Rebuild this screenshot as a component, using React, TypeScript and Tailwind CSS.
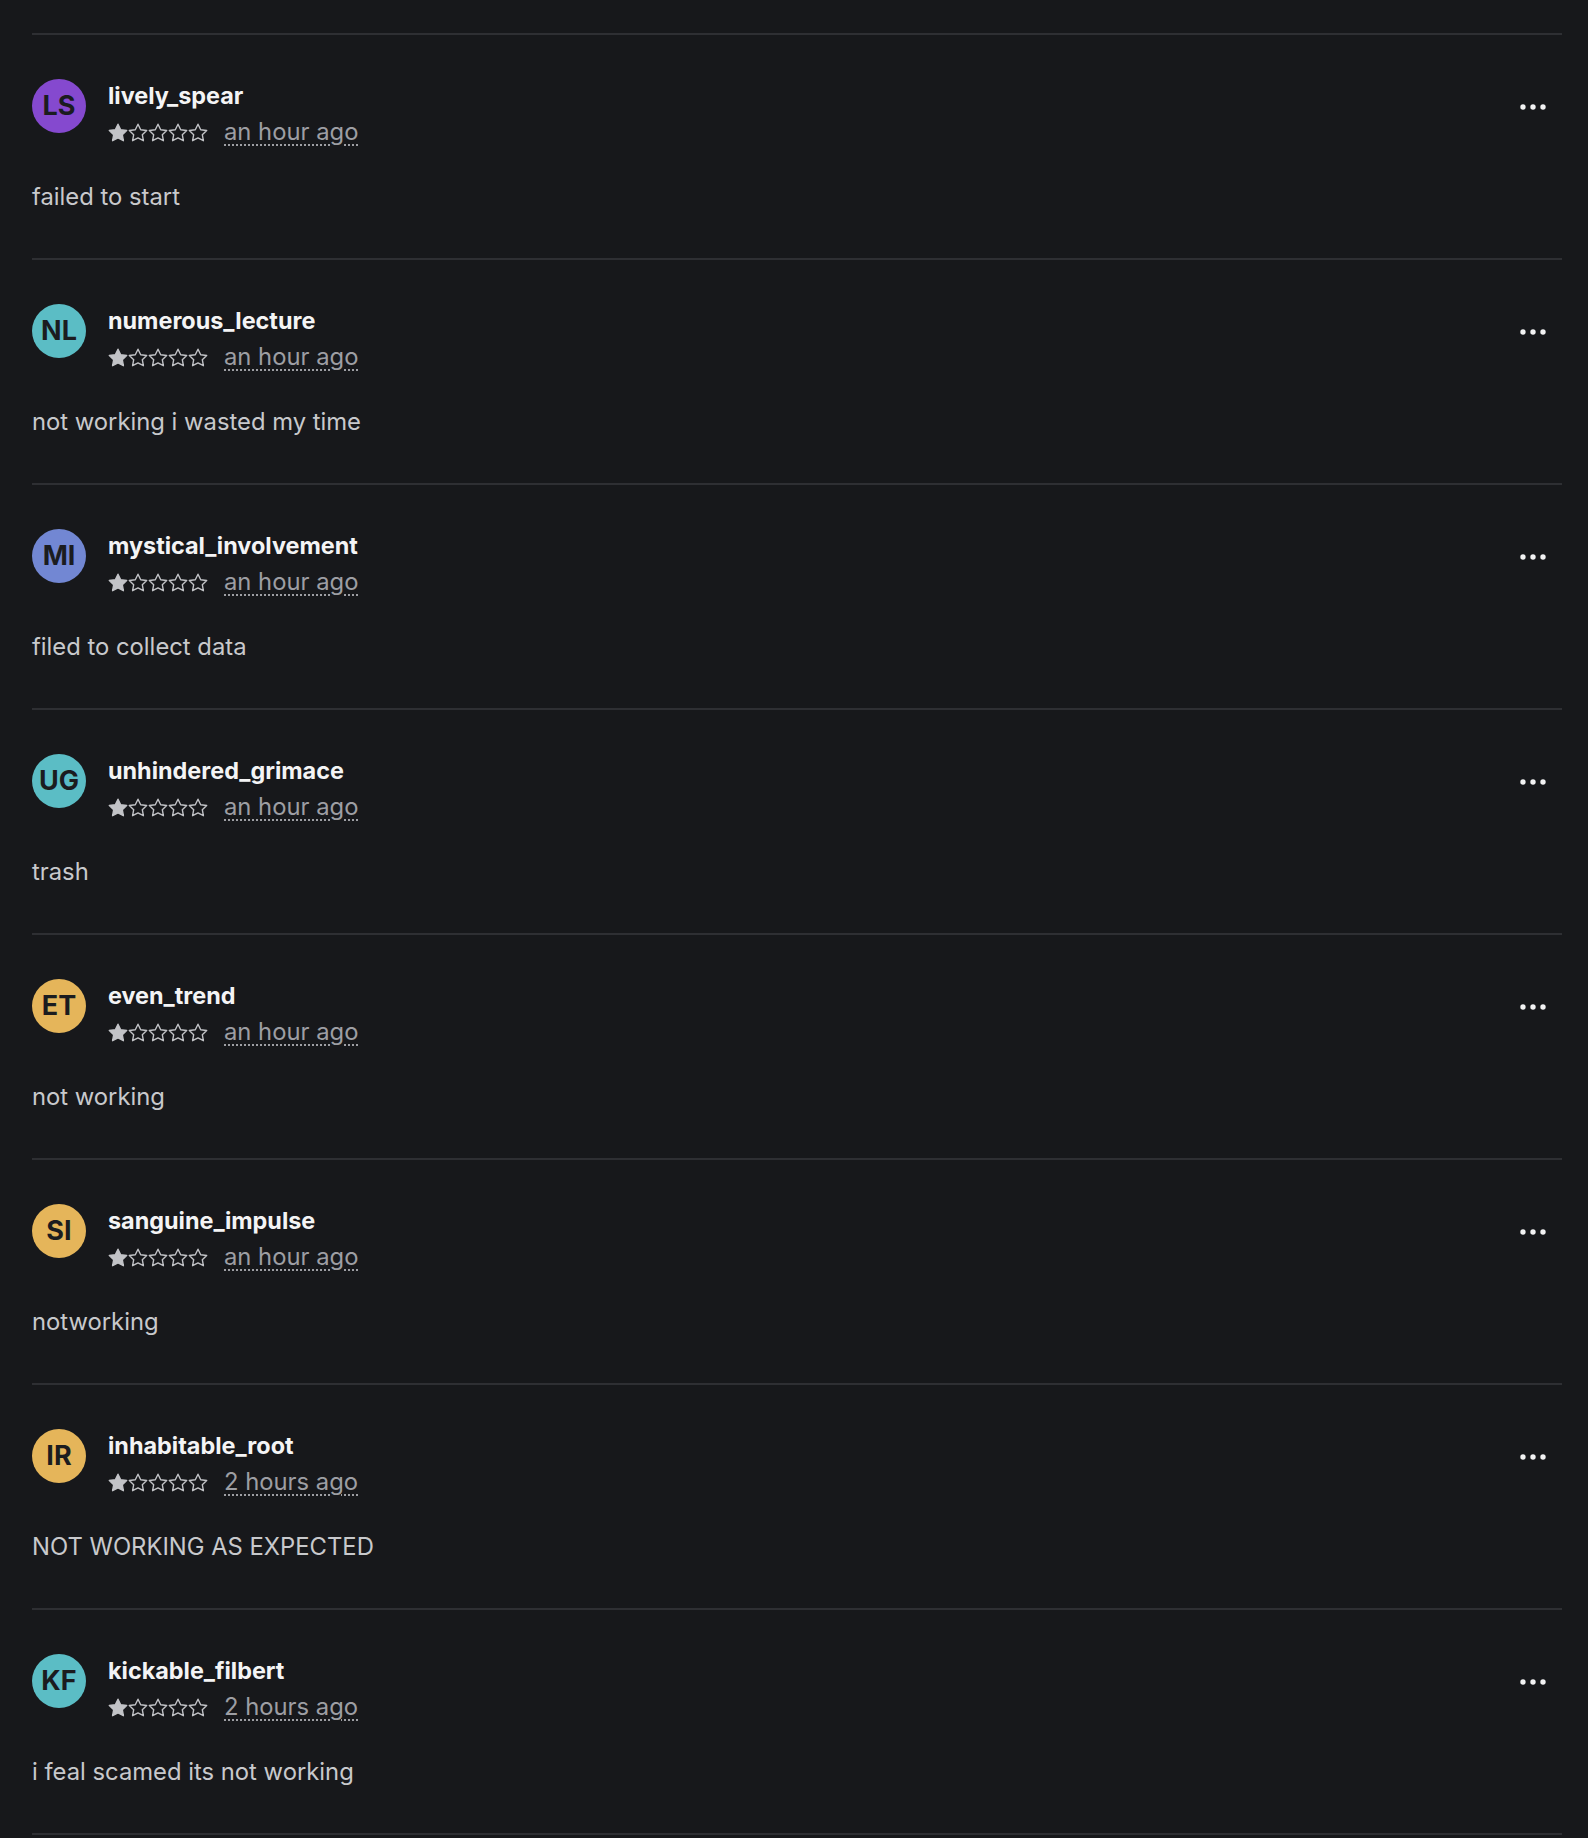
import React from "react";

type Review = {
  name: string;
  initials: string;
  color: string;
  time: string;
  text: string;
};

const reviews: Review[] = [
  { name: "lively_spear", initials: "LS", color: "bg-[#8549cf]", time: "an hour ago", text: "failed to start" },
  { name: "numerous_lecture", initials: "NL", color: "bg-[#5bbdc5]", time: "an hour ago", text: "not working i wasted my time" },
  { name: "mystical_involvement", initials: "MI", color: "bg-[#7287d3]", time: "an hour ago", text: "filed to collect data" },
  { name: "unhindered_grimace", initials: "UG", color: "bg-[#5bbdc5]", time: "an hour ago", text: "trash" },
  { name: "even_trend", initials: "ET", color: "bg-[#e5b55a]", time: "an hour ago", text: "not working" },
  { name: "sanguine_impulse", initials: "SI", color: "bg-[#e5b55a]", time: "an hour ago", text: "notworking" },
  { name: "inhabitable_root", initials: "IR", color: "bg-[#e5b55a]", time: "2 hours ago", text: "NOT WORKING AS EXPECTED" },
  { name: "kickable_filbert", initials: "KF", color: "bg-[#5bbdc5]", time: "2 hours ago", text: "i feal scamed its not working" },
];

const STAR = "M10 1.2l2.7 5.5 6 .8-4.4 4.2 1.1 6L10 14.9l-5.4 2.8 1.1-6-4.4-4.2 6-.8z";

function Stars({ value }: { value: number }) {
  return (
    <div className="flex items-center">
      {[1, 2, 3, 4, 5].map((i) => (
        <svg key={i} width="20" height="19" viewBox="0 0 20 19" className="text-[#c2c3c7]">
          <path
            d={STAR}
            fill={i <= value ? "currentColor" : "none"}
            stroke="currentColor"
            strokeWidth="1.4"
            strokeLinejoin="round"
          />
        </svg>
      ))}
    </div>
  );
}

function MoreIcon() {
  return (
    <svg width="28" height="8" viewBox="0 0 28 8" className="text-[#f2f2f3]">
      <circle cx="4" cy="4" r="2.7" fill="currentColor" />
      <circle cx="14" cy="4" r="2.7" fill="currentColor" />
      <circle cx="24" cy="4" r="2.7" fill="currentColor" />
    </svg>
  );
}

function ReviewItem({ r }: { r: Review }) {
  return (
    <div className="border-t-2 border-[#2e2f33] pt-[44px] pb-[46px]">
      <div className="flex items-start">
        <div
          className={`${r.color} w-[54px] h-[54px] rounded-full flex items-center justify-center shrink-0 text-[#1b1c1f] text-[27px] font-bold`}
        >
          {r.initials}
        </div>
        <div className="ml-[22px] mt-[3px] flex-1">
          <div className="text-[23.4px] leading-[28px] font-bold text-[#f4f4f5]">{r.name}</div>
          <div className="mt-[8px] h-[28px] flex items-center">
            <Stars value={1} />
            <span className="ml-[16px] text-[23.8px] leading-[28px] text-[#9d9ea3] underline decoration-dotted decoration-[1.5px] underline-offset-[4px]">
              {r.time}
            </span>
          </div>
        </div>
        <button className="mt-[24px] mr-[15px] flex">
          <MoreIcon />
        </button>
      </div>
      <p className="mt-[36px] text-[23.8px] leading-[30px] text-[#c8c9cc]">{r.text}</p>
    </div>
  );
}

export default function App() {
  return (
    <div
      className="min-h-screen bg-[#17181b] pl-8 pr-[26px] pt-[33px] pb-1"
      style={{ fontFamily: "Inter, 'Noto Sans', sans-serif" }}
    >
      <div className="border-b-2 border-[#2e2f33]">
        {reviews.map((r) => (
          <ReviewItem key={r.name} r={r} />
        ))}
      </div>
    </div>
  );
}
